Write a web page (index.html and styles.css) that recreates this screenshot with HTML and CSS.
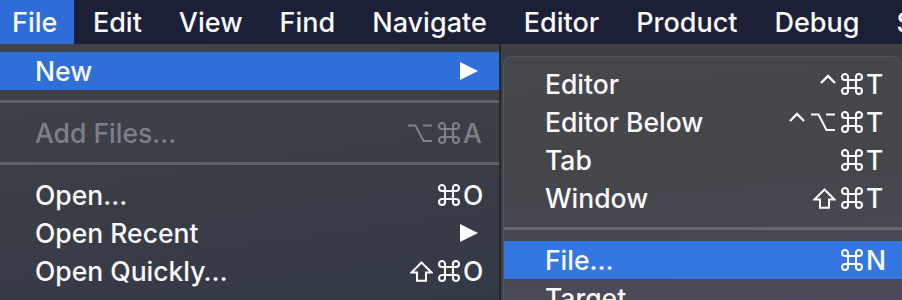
FILE: index.html
```html
<!DOCTYPE html>
<html>
<head>
<meta charset="utf-8">
<link rel="stylesheet" href="styles.css">
</head>
<body>
<div class="menubar">
  <span class="mb-item first active">File</span>
  <span class="mb-item">Edit</span>
  <span class="mb-item">View</span>
  <span class="mb-item">Find</span>
  <span class="mb-item">Navigate</span>
  <span class="mb-item">Editor</span>
  <span class="mb-item">Product</span>
  <span class="mb-item">Debug</span>
  <span class="mb-item">Source Control</span>
</div>
<div class="stage">
  <div class="menu main">
    <div class="row hl"><span>New</span><span class="sc"><svg class="arrow" viewBox="0 0 18 18"><path d="M0 0 L18 9 L0 18 Z" fill="#fff"/></svg></span></div>
    <div class="sep"></div>
    <div class="row dis"><span>Add Files…</span><span class="sc"><span class="mods"><svg class="m opt" viewBox="0 0 26 20"><path d="M1 2.5 H8.5 L16.5 18 H25 M16 2.5 H25"/></svg><svg class="m cmd" viewBox="0 0 22 22"><path d="M7 7 V4 A3 3 0 1 0 4 7 H18 A3 3 0 1 0 15 4 V18 A3 3 0 1 0 18 15 H4 A3 3 0 1 0 7 18 Z"/></svg></span><span class="key">A</span></span></div>
    <div class="sep"></div>
    <div class="row"><span>Open…</span><span class="sc"><span class="mods"><svg class="m cmd" viewBox="0 0 22 22"><path d="M7 7 V4 A3 3 0 1 0 4 7 H18 A3 3 0 1 0 15 4 V18 A3 3 0 1 0 18 15 H4 A3 3 0 1 0 7 18 Z"/></svg></span><span class="key">O</span></span></div>
    <div class="row"><span>Open Recent</span><span class="sc"><svg class="arrow" viewBox="0 0 18 18"><path d="M0 0 L18 9 L0 18 Z" fill="#fff"/></svg></span></div>
    <div class="row"><span>Open Quickly…</span><span class="sc"><span class="mods"><svg class="m shift" viewBox="0 0 23 21"><path d="M11.5 1.5 L21.5 11.5 H16 V19.8 H7 V11.5 H1.5 Z"/></svg><svg class="m cmd" viewBox="0 0 22 22"><path d="M7 7 V4 A3 3 0 1 0 4 7 H18 A3 3 0 1 0 15 4 V18 A3 3 0 1 0 18 15 H4 A3 3 0 1 0 7 18 Z"/></svg></span><span class="key">O</span></span></div>
  </div>
  <div class="menu sub">
    <div class="row"><span>Editor</span><span class="sc"><span class="mods"><svg class="m ctrl" viewBox="0 0 16 20"><path d="M1 9 L8 2 L15 9"/></svg><svg class="m cmd" viewBox="0 0 22 22"><path d="M7 7 V4 A3 3 0 1 0 4 7 H18 A3 3 0 1 0 15 4 V18 A3 3 0 1 0 18 15 H4 A3 3 0 1 0 7 18 Z"/></svg></span><span class="key">T</span></span></div>
    <div class="row"><span>Editor Below</span><span class="sc"><span class="mods"><svg class="m ctrl" viewBox="0 0 16 20"><path d="M1 9 L8 2 L15 9"/></svg><svg class="m opt" viewBox="0 0 26 20"><path d="M1 2.5 H8.5 L16.5 18 H25 M16 2.5 H25"/></svg><svg class="m cmd" viewBox="0 0 22 22"><path d="M7 7 V4 A3 3 0 1 0 4 7 H18 A3 3 0 1 0 15 4 V18 A3 3 0 1 0 18 15 H4 A3 3 0 1 0 7 18 Z"/></svg></span><span class="key">T</span></span></div>
    <div class="row"><span>Tab</span><span class="sc"><span class="mods"><svg class="m cmd" viewBox="0 0 22 22"><path d="M7 7 V4 A3 3 0 1 0 4 7 H18 A3 3 0 1 0 15 4 V18 A3 3 0 1 0 18 15 H4 A3 3 0 1 0 7 18 Z"/></svg></span><span class="key">T</span></span></div>
    <div class="row"><span>Window</span><span class="sc"><span class="mods"><svg class="m shift" viewBox="0 0 23 21"><path d="M11.5 1.5 L21.5 11.5 H16 V19.8 H7 V11.5 H1.5 Z"/></svg><svg class="m cmd" viewBox="0 0 22 22"><path d="M7 7 V4 A3 3 0 1 0 4 7 H18 A3 3 0 1 0 15 4 V18 A3 3 0 1 0 18 15 H4 A3 3 0 1 0 7 18 Z"/></svg></span><span class="key">T</span></span></div>
    <div class="sep"></div>
    <div class="row hl2"><span>File…</span><span class="sc"><span class="mods"><svg class="m cmd" viewBox="0 0 22 22"><path d="M7 7 V4 A3 3 0 1 0 4 7 H18 A3 3 0 1 0 15 4 V18 A3 3 0 1 0 18 15 H4 A3 3 0 1 0 7 18 Z"/></svg></span><span class="key">N</span></span></div>
    <div class="row"><span>Target…</span><span class="sc"></span></div>
  </div>
</div>
</body>
</html>
```

FILE: styles.css
```css
html, body {
  margin: 0;
  padding: 0;
}
body {
  width: 902px;
  height: 300px;
  overflow: hidden;
  background: #3e4045;
  font-family: Inter, "Noto Sans", "DejaVu Sans", sans-serif;
  font-size: 26.5px;
  font-weight: 500;
  color: #fafafc;
}
.menubar {
  display: flex;
  height: 44px;
  background: #1b2036;
  white-space: nowrap;
  overflow: hidden;
  font-size: 27px;
}
.mb-item {
  display: flex;
  align-items: center;
  padding: 0 18.5px;
  height: 44px;
}
.mb-item.first {
  padding-left: 12px;
  padding-right: 17px;
}
.mb-item.active {
  background: #2e6dd8;
}
.stage {
  position: relative;
  height: 256px;
}
.menu.main {
  width: 501px;
  height: 256px;
  box-sizing: border-box;
  padding-top: 8px;
  border-right: 2px solid #26282d;
  background: linear-gradient(172deg, #404348 0%, #3a3e46 45%, #333947 100%);
}
.menu.sub {
  position: absolute;
  left: 503px;
  top: 12px;
  width: 399px;
  height: 244px;
  overflow: hidden;
  box-sizing: border-box;
  padding-top: 8px;
  border-radius: 9px 9px 0 0;
  border-top: 1px solid #55575c;
  border-left: 1px solid #55575c;
  background: linear-gradient(175deg, #46474b 0%, #45464c 50%, #4c4b5d 100%);
}
.row {
  display: flex;
  align-items: center;
  justify-content: space-between;
  height: 38px;
  flex-shrink: 0;
  white-space: nowrap;
}
.main .row {
  padding: 0 14px 0 35px;
}
.sub .row {
  padding: 0 14px 0 41px;
}
.row.hl {
  background: #2f6fd8;
}
.row.hl2 {
  background: #3577e0;
}
.row.dis {
  color: #7c8089;
}
.sep {
  height: 24px;
  box-sizing: border-box;
  padding-top: 10px;
}
.sep::before {
  content: "";
  display: block;
  height: 3px;
  background: #5c6067;
}
.sub .sep::before {
  background: #65676d;
}
.sc {
  display: flex;
  align-items: center;
}
.mods {
  display: flex;
  align-items: center;
  gap: 5px;
  margin-right: 3px;
}
.m {
  fill: none;
  stroke: #fafafc;
  stroke-width: 2.2;
  stroke-linejoin: miter;
}
.dis .m {
  stroke: #7c8089;
}
.m.cmd {
  width: 22px;
  height: 22px;
  stroke-width: 2.1;
}
.m.shift {
  width: 23px;
  height: 21px;
  stroke-width: 2;
}
.m.opt {
  width: 26px;
  height: 20px;
  stroke-width: 2;
}
.m.ctrl {
  width: 16px;
  height: 20px;
  stroke-width: 2.4;
}
.key {
  width: 22px;
  text-align: left;
}
.arrow {
  width: 18px;
  height: 18px;
  margin-right: 7px;
}
```
